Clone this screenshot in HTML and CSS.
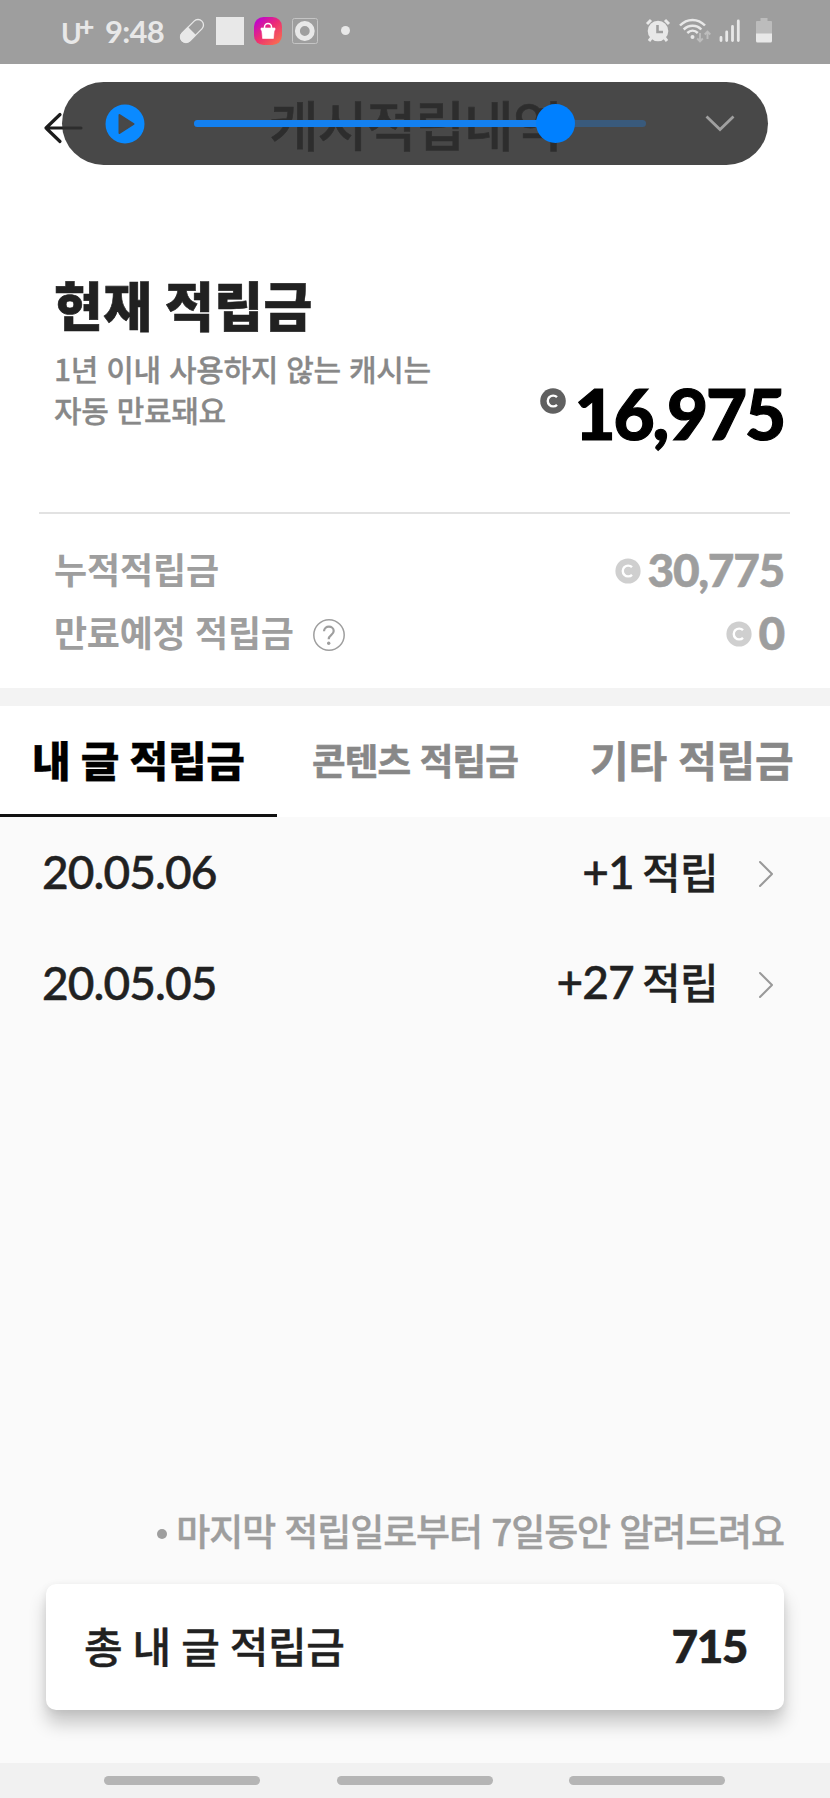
FILE: index.html
```html
<!DOCTYPE html>
<html lang="ko">
<head>
<meta charset="utf-8">
<title>캐시적립내역</title>
<link rel="stylesheet" href="styles.css">
</head>
<body>
<div class="screen">
  <header class="status">
    <div class="status-left">
      <span class="carrier">U<sup>+</sup></span>
      <span class="clock">9:48</span>
      <svg class="pill-icon" width="26" height="26" viewBox="0 0 26 26"><g transform="rotate(-45 13 13)"><rect x="-1" y="7.500" width="28" height="11" rx="5.500" fill="none" stroke="#e8e8e8" stroke-width="1.300"/><path d="M13 7H4.500a6 6 0 0 0 0 12H13z" fill="#e8e8e8"/></g></svg>
      <span class="square"></span>
      <svg class="shop" width="28" height="28" viewBox="0 0 28 28"><defs><linearGradient id="g" x1="0" y1="0.1" x2="0.8" y2="1"><stop offset="0" stop-color="#b800d8"/><stop offset=".5" stop-color="#ed2c74"/><stop offset="1" stop-color="#f86c50"/></linearGradient></defs><rect width="28" height="28" rx="9.500" fill="url(#g)"/><path d="M7 11h14v2.200h-.8L19.400 21.500H8.600L7.800 13.200H7z" fill="#fff" stroke="#fff" stroke-width=".6" stroke-linejoin="round"/><path d="M10.500 11.500V10a3.500 3.500 0 0 1 7 0v1.500" fill="none" stroke="#fff" stroke-width="1.500"/></svg>
      <svg class="record" width="26" height="26" viewBox="0 0 26 26"><rect x=".5" y=".5" width="25" height="25" rx="2" fill="none" stroke="#c4c4c4"/><circle cx="12.800" cy="13" r="7.400" fill="none" stroke="#e8e8e8" stroke-width="5"/></svg>
      <span class="dot"></span>
    </div>
    <div class="status-right">
      <svg width="27" height="26" viewBox="0 0 27 26"><circle cx="13" cy="13" r="10.300" fill="#e8e8e8"/><path d="M2 6l4-4M24 6l-4-4M4 23l3-4M22 23l-3-4" stroke="#e8e8e8" stroke-width="3"/><path d="M12.500 7v7H18" fill="none" stroke="#9e9e9e" stroke-width="2.600"/></svg>
      <svg class="wifi" width="32" height="26" viewBox="0 0 32 26"><g fill="none" stroke="#e8e8e8" stroke-width="2.500"><path d="M1 7.500c7-7.500 18-7.500 25 0M4.700 11.500c5-5 13-5 17.600 0M8.300 15c3.200-3 7.400-3 10.500 0"/></g><circle cx="13.500" cy="19" r="2" fill="#e8e8e8"/><path d="M21 15v8M18.200 20.500l2.800 2.800 2.800-2.800M28.500 21v-7M25.700 16.500l2.800-2.800 2.800 2.800" fill="none" stroke="#bdbdbd" stroke-width="1.900"/></svg>
      <svg class="signal" width="22" height="24" viewBox="0 0 22 24"><path d="M2 18.500v3M7.700 13v8.500M13.500 7.500v14M19.300 2v19.500" stroke="#e8e8e8" stroke-width="2.800" stroke-linecap="round"/></svg>
      <svg class="battery" width="16" height="25" viewBox="0 0 16 25"><path d="M4.500 0h7v3H15a1 1 0 0 1 1 1v12H0V4a1 1 0 0 1 1-1h3.500z" fill="#bcbcbc"/><path d="M0 15.500h16V23a1.500 1.500 0 0 1-1.500 1.500h-13A1.500 1.500 0 0 1 0 23z" fill="#e8e8e8"/></svg>
    </div>
  </header>

  <section class="titlebar">
    <svg class="back" width="40" height="32" viewBox="0 0 40 32"><path d="M37 16H2M16 2.500L2 16l14 13.500" fill="none" stroke="#1c1c1c" stroke-width="3.200" stroke-linecap="round" stroke-linejoin="round"/></svg>
    <h1 class="page-title">캐시적립내역</h1>
    <div class="player">
      <svg class="play" width="40" height="40" viewBox="0 0 40 40"><circle cx="20" cy="20" r="19.500" fill="#0a8aff"/><path d="M14.500 11l14 9-14 9z" fill="#484848" stroke="#484848" stroke-width="2" stroke-linejoin="round"/></svg>
      <div class="track"><div class="track-fill"></div><div class="knob"></div></div>
      <svg class="down" width="30" height="18" viewBox="0 0 30 18"><path d="M1.500 1.500L15 14.500l13.500-13" fill="none" stroke="#a0a0a0" stroke-width="2.800"/></svg>
    </div>
  </section>

  <section class="balance">
    <div class="balance-info">
      <h2 class="balance-title">현재 적립금</h2>
      <p class="balance-desc">1년 이내 사용하지 않는 캐시는<br>자동 만료돼요</p>
    </div>
    <div class="amount">
      <svg class="coin coin-dark" width="26" height="26" viewBox="0 0 26 26"><circle cx="13" cy="13" r="12.800" fill="#606060"/><path d="M17 9.200a5.400 5.400 0 1 0 0 7.600" fill="none" stroke="#fff" stroke-width="2.400"/></svg>
      <span class="amount-big">16,975</span>
    </div>
  </section>

  <section class="totals">
    <div class="total-row">
      <span class="label label-sum">누적적립금</span>
      <svg class="coin" width="26" height="26" viewBox="0 0 26 26"><circle cx="13" cy="13" r="12.600" fill="#cfcfcf"/><path d="M17 9.200a5.400 5.400 0 1 0 0 7.600" fill="none" stroke="#fff" stroke-width="2.400"/></svg>
      <span class="amount-mid">30,775</span>
    </div>
    <div class="total-row">
      <span class="label label-exp">만료예정 적립금</span>
      <svg class="help" width="32" height="32" viewBox="0 0 32 32"><g fill="none" stroke="#9e9e9e"><circle cx="16" cy="16" r="15.200" stroke-width="1.500"/><path d="M11 12.300c.2-6.300 9.700-6 9.700-.3 0 4-5 3.600-5 8.300" stroke-width="2.200"/></g><circle cx="15.700" cy="24.300" r="1.700" fill="#9e9e9e"/></svg>
      <svg class="coin" width="26" height="26" viewBox="0 0 26 26"><circle cx="13" cy="13" r="12.600" fill="#cfcfcf"/><path d="M17 9.200a5.400 5.400 0 1 0 0 7.600" fill="none" stroke="#fff" stroke-width="2.400"/></svg>
      <span class="amount-mid">0</span>
    </div>
  </section>

  <nav class="tabs">
    <a class="tab tab-active">내 글 적립금</a>
    <a class="tab tab-content">콘텐츠 적립금</a>
    <a class="tab tab-etc">기타 적립금</a>
  </nav>

  <main class="history">
    <div class="entry"><span class="date">20.05.06</span><span class="gain"><span class="num">+1</span> <span class="unit">적립</span></span><svg class="chev" width="16" height="28" viewBox="0 0 16 28"><path d="M2 2l12 12L2 26" fill="none" stroke="#999" stroke-width="2" stroke-linecap="round" stroke-linejoin="round"/></svg></div>
    <div class="entry"><span class="date">20.05.05</span><span class="gain"><span class="num">+27</span> <span class="unit">적립</span></span><svg class="chev" width="16" height="28" viewBox="0 0 16 28"><path d="M2 2l12 12L2 26" fill="none" stroke="#999" stroke-width="2" stroke-linecap="round" stroke-linejoin="round"/></svg></div>
  </main>

  <footer class="summary">
    <p class="note"><span class="bullet"></span><span class="note-text">마지막 적립일로부터 7일동안 알려드려요</span></p>
    <div class="card"><span class="card-label">총 내 글 적립금</span><span class="card-value">715</span></div>
  </footer>

  <div class="navbar"><span></span><span></span><span></span></div>
</div>
</body>
</html>
```
FILE: styles.css
```css
* { box-sizing: border-box; }
body { margin: 0; background: #fafafa; }
h1, h2, p { margin: 0; }
svg { display: block; flex: none; overflow: visible; }
.screen {
  width: 830px;
  height: 1798px;
  display: flex;
  flex-direction: column;
  overflow: hidden;
  background: #fafafa;
  color: #212121;
  font-family: "Noto Sans CJK KR", sans-serif;
  white-space: nowrap;
}

.status {
  height: 63.500px;
  flex: none;
  display: flex;
  justify-content: space-between;
  background: #9e9e9e;
  color: #e8e8e8;
  padding: 0 58px 2px 61px;
}
.status-left, .status-right { display: flex; align-items: center; }
.status-left { font-family: Lato, sans-serif; }
.carrier { width: 44px; font-size: 28px; font-weight: 700; line-height: 40px; padding-top: 4px; letter-spacing: -3px; }
.carrier sup { font-size: 27px; font-weight: 900; line-height: 0; vertical-align: 8px; }
.clock { width: 73px; font-size: 31px; font-weight: 700; line-height: 40px; letter-spacing: -0.700px; }
.square { width: 28px; height: 28px; margin: 0 10px 0 11px; background: #e8e8e8; }
.pill-icon { margin-left: 1px; }
.record { margin-left: 10px; }
.dot { width: 9px; height: 9px; margin-left: 23px; border-radius: 50%; background: #e8e8e8; }
.wifi { margin-left: 7px; }
.signal { margin-left: 8px; }
.battery { margin-left: 15px; }

.titlebar {
  position: relative;
  flex: none;
  height: 204.500px;
  display: flex;
  align-items: flex-start;
  background: #fff;
}
.back { margin: 48.500px 0 0 44px; }
.page-title { margin: 30px 0 0 185px; font-size: 54px; line-height: 60px; font-weight: 500; letter-spacing: -0.900px; -webkit-text-stroke: .6px #212121; }
.player {
  position: absolute;
  left: 62px;
  top: 18.500px;
  width: 706px;
  height: 83px;
  display: flex;
  align-items: center;
  border-radius: 42px;
  background: rgba(48, 48, 48, .883);
}
.play { margin-left: 42.500px; }
.track { position: relative; width: 452px; height: 7px; margin-left: 49.500px; border-radius: 4px; background: #395a7c; }
.track-fill { width: 362px; height: 7px; border-radius: 4px; background: #1380f0; }
.knob { position: absolute; left: 342px; top: -16px; width: 39px; height: 39px; border-radius: 50%; background: #0080ff; }
.down { margin-left: 59px; }

.balance {
  flex: none;
  height: 244px;
  padding: 0 46px 0 54px;
  display: flex;
  justify-content: space-between;
  background: #fff;
}
.balance-title { margin-top: 1px; font-size: 53px; line-height: 70px; font-weight: 900; letter-spacing: .400px; word-spacing: -2.500px; -webkit-text-stroke: .6px #212121; }
.balance-desc { margin-top: 9px; font-size: 30px; line-height: 41px; font-weight: 500; color: #888; letter-spacing: -0.300px; -webkit-text-stroke: .3px #888; }
.amount { display: flex; gap: 9px; padding-top: 100px; }
.coin-dark { margin-top: 20px; }
.amount-big { font: 900 71px/90px Lato, sans-serif; color: #000; letter-spacing: -2.200px; -webkit-text-stroke: 1.200px #000; }

.totals { flex: none; height: 176px; padding: 26px 46px 0 54px; background: linear-gradient(#e2e2e2, #e2e2e2) 39px 0 / 751px 2px no-repeat #fff; }
.total-row { height: 63px; display: flex; align-items: center; color: #9e9e9e; }
.label { margin: -4px auto 0 0; font-size: 36px; font-weight: 700; line-height: 60px; letter-spacing: -0.100px; }
.label-exp { margin-right: 19px; letter-spacing: -0.300px; }
.help { margin: 4px auto 0 0; }
.total-row .coin { margin-top: 2px; }
.coin + .amount-mid { margin-left: 7px; }
.amount-mid { font: 900 46px/60px Lato, sans-serif; letter-spacing: -1.300px; -webkit-text-stroke: .5px #9e9e9e; }

.tabs { flex: none; height: 129px; display: flex; border-top: 18px solid #f3f3f3; background: #fff; font-weight: 700; color: #888; line-height: 105px; }
.tab { width: 277px; text-align: center; font-size: 42px; letter-spacing: -0.300px; -webkit-text-stroke: .6px #888; }
.tab-active { height: 111px; border-bottom: 3px solid #111; color: #000; font-weight: 900; word-spacing: -1px; -webkit-text-stroke: .3px #000; }
.tab-content { font-size: 36.500px; letter-spacing: -0.800px; line-height: 107px; }

.history { flex: none; }
.entry { height: 110.500px; padding: 0 56px 0 42px; display: flex; align-items: center; font-weight: 500; }
.date, .num { font-family: Lato, sans-serif; font-size: 46px; letter-spacing: -0.900px; -webkit-text-stroke: .5px #212121; }
.num { margin-right: -3px; }
.date { margin-right: auto; line-height: 60px; }
.gain { margin-top: -2px; font-size: 42px; line-height: 60px; letter-spacing: -0.600px; }
.unit { -webkit-text-stroke: .3px #212121; }
.chev { margin: 4px 0 0 40px; }

.summary { margin-top: auto; flex: none; padding: 0 46px 53px; }
.note { display: flex; align-items: center; justify-content: flex-end; color: #9e9e9e; font-size: 37px; font-weight: 500; line-height: 60px; letter-spacing: -1.100px; -webkit-text-stroke: .4px #9e9e9e; }
.note-text { margin-top: 1px; }
.bullet { width: 10px; height: 10px; margin: 8px 9px 0 0; border-radius: 50%; background: #9e9e9e; }
.card { height: 126px; margin-top: 24px; padding: 0 37px 0 38px; display: flex; align-items: center; justify-content: space-between; border-radius: 10px; background: #fff; box-shadow: 0 14px 18px rgba(0, 0, 0, .2), 0 2px 8px rgba(0, 0, 0, .08); }
.card-label { margin-top: -4px; font-size: 42px; font-weight: 500; line-height: 60px; letter-spacing: -0.400px; word-spacing: -1px; -webkit-text-stroke: .4px #212121; }
.card-value { margin-top: -2px; font: 900 46px/60px Lato, sans-serif; letter-spacing: -1.500px; -webkit-text-stroke: .5px #212121; }

.navbar { flex: none; height: 35px; padding: 0 105px 0 104px; display: flex; align-items: center; justify-content: space-between; background: #f1f1f1; }
.navbar span { width: 156px; height: 9px; border-radius: 5px; background: #b5b5b5; }
```
